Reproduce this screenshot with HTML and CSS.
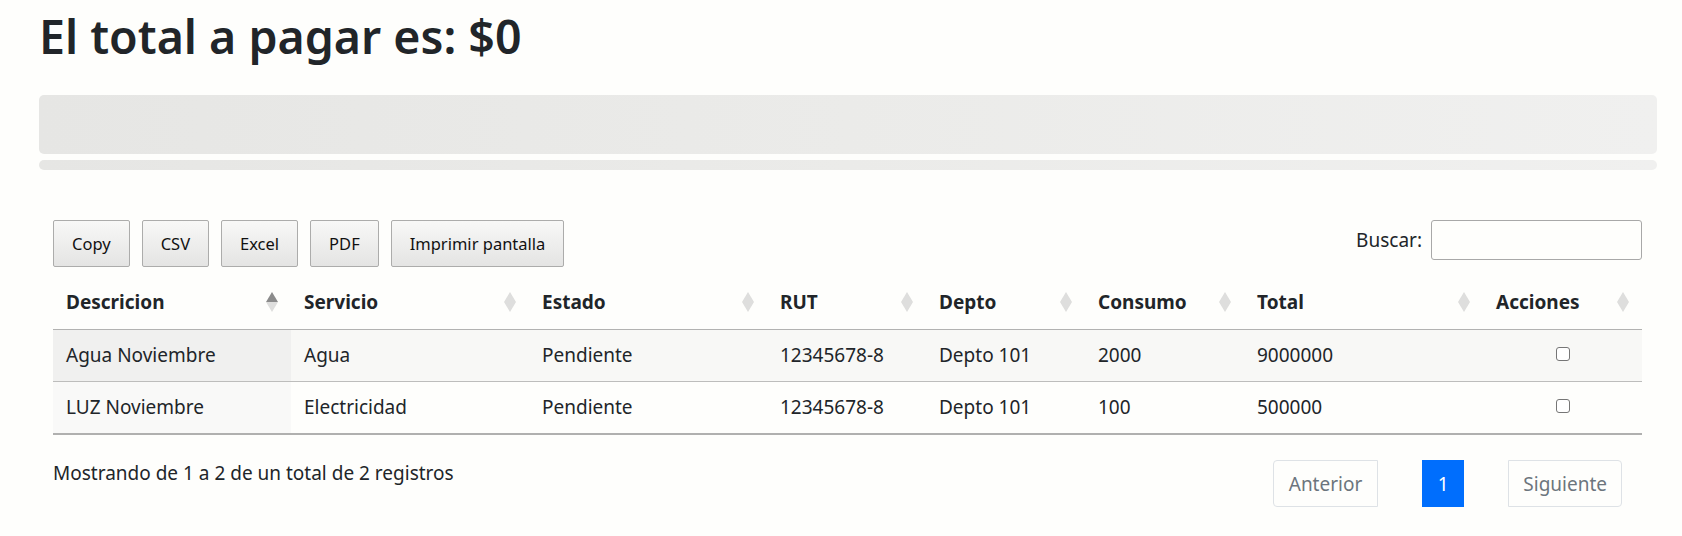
FILE: index.html
```html
<!DOCTYPE html>
<html lang="es">
<head>
<meta charset="utf-8">
<title>Total a pagar</title>
<link rel="stylesheet" href="styles.css">
</head>
<body>
<div class="page">
  <h1 class="title">El total a pagar es: $0</h1>
  <div class="skeleton-box"></div>
  <div class="skeleton-bar"></div>

  <div class="table-wrap">
    <div class="toolbar">
      <div class="buttons">
        <button class="dt-btn">Copy</button>
        <button class="dt-btn">CSV</button>
        <button class="dt-btn">Excel</button>
        <button class="dt-btn">PDF</button>
        <button class="dt-btn">Imprimir pantalla</button>
      </div>
      <label class="search">Buscar: <input type="search" class="search-input"></label>
    </div>

    <table class="data">
      <colgroup>
        <col class="w-wide"><col class="w-wide"><col class="w-wide">
        <col class="w-narrow"><col class="w-narrow"><col class="w-narrow">
        <col class="w-total"><col class="w-last">
      </colgroup>
      <thead>
        <tr>
          <th class="sort asc">Descricion</th>
          <th class="sort">Servicio</th>
          <th class="sort">Estado</th>
          <th class="sort">RUT</th>
          <th class="sort">Depto</th>
          <th class="sort">Consumo</th>
          <th class="sort">Total</th>
          <th class="sort">Acciones</th>
        </tr>
      </thead>
      <tbody>
        <tr class="odd">
          <td class="sorted">Agua Noviembre</td>
          <td>Agua</td>
          <td>Pendiente</td>
          <td>12345678-8</td>
          <td>Depto 101</td>
          <td>2000</td>
          <td>9000000</td>
          <td class="center"><input type="checkbox" class="check"></td>
        </tr>
        <tr class="even">
          <td class="sorted">LUZ Noviembre</td>
          <td>Electricidad</td>
          <td>Pendiente</td>
          <td>12345678-8</td>
          <td>Depto 101</td>
          <td>100</td>
          <td>500000</td>
          <td class="center"><input type="checkbox" class="check"></td>
        </tr>
      </tbody>
    </table>

    <div class="footer">
      <div class="info">Mostrando de 1 a 2 de un total de 2 registros</div>
      <div class="paging">
        <a class="pg first">Anterior</a>
        <a class="pg current">1</a>
        <a class="pg last">Siguiente</a>
      </div>
    </div>
  </div>
</div>
</body>
</html>
```

FILE: styles.css
```css
html, body {
  margin: 0;
  background: #fefefc;
}

body {
  font-family: "Noto Sans", "Open Sans", sans-serif;
  font-size: 19px;
  color: #212529;
}

.page {
  padding: 6px 25px 0 39px;
}

.title {
  margin: 0 0 29px;
  font-size: 46.5px;
  font-weight: 600;
  line-height: 60px;
  color: #212529;
}

.skeleton-box,
.skeleton-bar {
  background: linear-gradient(90deg, #e6e6e4 0%, #ebebe9 50%, #f0f0ef 100%);
  border-radius: 5px;
}

.skeleton-box {
  height: 59px;
}

.skeleton-bar {
  height: 10px;
  margin-top: 6px;
}

.table-wrap {
  padding: 50px 15px 0 14px;
}

.toolbar {
  display: flex;
  justify-content: space-between;
  align-items: flex-start;
  height: 47px;
}

.buttons {
  display: flex;
  gap: 12px;
}

.dt-btn {
  height: 47px;
  padding: 0 18px;
  font-family: inherit;
  font-size: 16.5px;
  color: #111;
  border: 1px solid #acacab;
  border-radius: 2px;
  background: linear-gradient(to bottom, #f8f8f7 0%, #e4e4e3 100%);
}

.search {
  display: flex;
  align-items: center;
  gap: 9px;
  height: 40px;
}

.search-input {
  width: 211px;
  height: 40px;
  box-sizing: border-box;
  border: 1px solid #a8a8a8;
  border-radius: 3px;
  background: #fefefc;
  margin: 0;
}

.data {
  width: 100%;
  margin-top: 8px;
  border-collapse: separate;
  border-spacing: 0;
  table-layout: fixed;
}

.w-wide { width: 238px; }
.w-narrow { width: 159px; }
.w-total { width: 239px; }
.w-last { width: 159px; }

.data th {
  position: relative;
  padding: 12px 13px;
  line-height: 30px;
  text-align: left;
  font-weight: 700;
  border-bottom: 1px solid #b2b2b1;
}

.sort::before,
.sort::after {
  content: "";
  position: absolute;
  right: 13px;
  width: 0;
  height: 0;
  border-left: 6px solid transparent;
  border-right: 6px solid transparent;
}

.sort::before {
  top: 17px;
  border-bottom: 10px solid #dededd;
}

.sort::after {
  top: 27px;
  border-top: 10px solid #dededd;
}

.sort.asc::before {
  border-bottom-color: #8b8b8b;
}

.data td {
  padding: 10px 13px;
  line-height: 31px;
  white-space: nowrap;
}

.data tr.odd td {
  background: #f8f8f6;
  border-bottom: 1px solid #bdbdbc;
}

.data tr.odd td.sorted {
  background: #f0f0ef;
}

.data tr.even td {
  border-bottom: 2px solid #b0b0af;
}

.data tr.even td.sorted {
  background: #f9f9f8;
}

.data td.center {
  text-align: center;
}

.check {
  appearance: none;
  -webkit-appearance: none;
  width: 14px;
  height: 14px;
  margin: 7px 0 0;
  border: 1px solid #767676;
  border-radius: 3px;
  background: #fff;
  vertical-align: top;
}

.footer {
  display: flex;
  justify-content: space-between;
  align-items: flex-start;
  padding-top: 23px;
}

.info {
  line-height: 30px;
}

.paging {
  display: flex;
  gap: 44px;
  margin-top: 2px;
  margin-right: 20px;
}

.pg {
  display: flex;
  align-items: center;
  justify-content: center;
  height: 47px;
  box-sizing: border-box;
  padding: 0 14px;
  border: 1px solid #dee2e6;
  color: #6c757d;
  background: #fefefc;
}

.pg.first {
  padding: 0 15px;
  border-radius: 4px 0 0 4px;
}

.pg.last {
  border-radius: 0 4px 4px 0;
}

.pg.current {
  min-width: 42px;
  background: #006efd;
  border-color: #006efd;
  color: #fff;
}
```
